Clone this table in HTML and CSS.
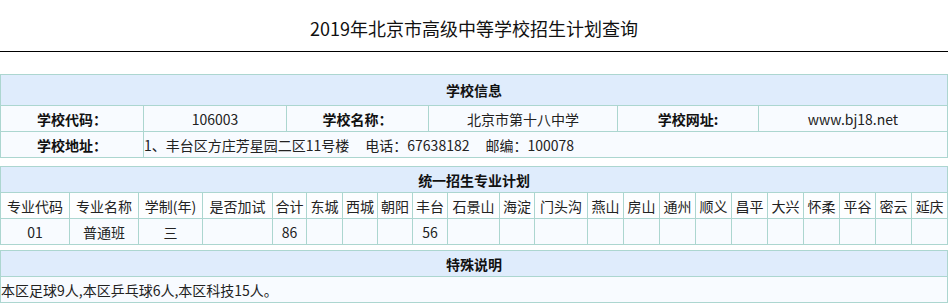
FILE: index.html
```html
<!DOCTYPE html>
<html lang="zh-CN">
<head>
<meta charset="utf-8">
<title>2019年北京市高级中等学校招生计划查询</title>
<link rel="stylesheet" href="styles.css">
</head>
<body>
<div class="title">2019年北京市高级中等学校招生计划查询</div>

<table class="grid t-info">
  <colgroup>
    <col class="c143"><col class="c143"><col class="c142"><col class="c189"><col class="c141"><col class="c189">
  </colgroup>
  <tr class="head tall"><td colspan="6">学校信息</td></tr>
  <tr class="row">
    <td class="lbl">学校代码：</td><td>106003</td>
    <td class="lbl">学校名称：</td><td>北京市第十八中学</td>
    <td class="lbl">学校网址:</td><td>www.bj18.net</td>
  </tr>
  <tr class="row">
    <td class="lbl">学校地址：</td>
    <td colspan="5" class="left">1、丰台区方庄芳星园二区11号楼<span class="sep">电话：67638182</span><span class="sep">邮编：100078</span></td>
  </tr>
</table>

<table class="grid t-plan">
  <colgroup>
    <col class="c69"><col class="c69"><col class="c64"><col class="c70"><col class="c34"><col class="c36"><col class="c35"><col class="c35"><col class="c35"><col class="c52"><col class="c35"><col class="c53"><col class="c36"><col class="c36"><col class="c36"><col class="c36"><col class="c36"><col class="c36"><col class="c36"><col class="c36"><col class="c36"><col class="c36">
  </colgroup>
  <tr class="head"><td colspan="22">统一招生专业计划</td></tr>
  <tr class="cols">
    <td>专业代码</td><td>专业名称</td><td>学制(年)</td><td>是否加试</td><td>合计</td><td>东城</td><td>西城</td><td>朝阳</td><td>丰台</td><td>石景山</td><td>海淀</td><td>门头沟</td><td>燕山</td><td>房山</td><td>通州</td><td>顺义</td><td>昌平</td><td>大兴</td><td>怀柔</td><td>平谷</td><td>密云</td><td>延庆</td>
  </tr>
  <tr class="row">
    <td>01</td><td>普通班</td><td>三</td><td></td><td>86</td><td></td><td></td><td></td><td>56</td><td></td><td></td><td></td><td></td><td></td><td></td><td></td><td></td><td></td><td></td><td></td><td></td><td></td>
  </tr>
</table>

<table class="grid t-note">
  <tr class="head"><td>特殊说明</td></tr>
  <tr class="row"><td class="left">本区足球9人,本区乒乓球6人,本区科技15人。</td></tr>
</table>
</body>
</html>
```
FILE: styles.css
```css
html, body {
  margin: 0;
  padding: 0;
  background: #fff;
}
body {
  font-family: "Noto Sans CJK SC", "Noto Sans", sans-serif;
  font-size: 14px;
  color: #222;
}
.title {
  height: 45px;
  padding-top: 6px;
  line-height: 45px;
  text-align: center;
  font-size: 18px;
  color: #111;
  border-bottom: 1px solid #000;
}
.grid {
  width: 948px;
  border-collapse: collapse;
  table-layout: fixed;
}
.grid td {
  border: 1px solid #acd6d0;
  padding: 0;
  height: 25px;
  line-height: 20px;
  text-align: center;
  white-space: nowrap;
  overflow: hidden;
}
.t-info { margin-top: 22px; }
.t-plan { margin-top: 8px; }
.t-note { margin-top: 5px; }
.head td {
  background: #dfecfc;
  font-weight: bold;
  color: #111;
}
.head.tall td { height: 30px; }
.row td { background: #f8fbff; }
.cols td { background: #fdfeff; }
.grid td.lbl {
  font-weight: bold;
  color: #111;
}
.grid td.left { text-align: left; }
.sep { margin-left: 16px; }
.c34 { width: 34px; }
.c35 { width: 35px; }
.c36 { width: 36px; }
.c52 { width: 52px; }
.c53 { width: 53px; }
.c64 { width: 64px; }
.c69 { width: 69px; }
.c70 { width: 70px; }
.c141 { width: 141px; }
.c142 { width: 142px; }
.c143 { width: 143px; }
.c189 { width: 189px; }
```
